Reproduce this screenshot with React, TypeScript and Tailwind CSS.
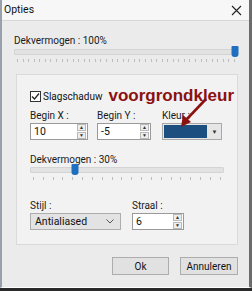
import type { ReactNode } from "react";

const font = { fontFamily: 'Roboto, "Noto Sans", sans-serif' };

function Ticks({ count }: { count: number }) {
  return (
    <div className="mt-[4px] flex h-[3px] justify-between px-[3px]">
      {Array.from({ length: count }).map((_, i) => (
        <span key={i} className="h-[3px] w-px bg-[#bdbdbd]" />
      ))}
    </div>
  );
}

function Slider({ pct, ticks }: { pct: number; ticks: number }) {
  return (
    <div>
      <div className="relative h-[6px] rounded-[1px] border border-[#d4d4d4] bg-[#e2e2e2]">
        <div
          className="absolute top-[-4px] h-[11px] w-[7px] -translate-x-1/2 rounded-b-[3px] rounded-t-[1px] bg-[#1f6fc0]"
          style={{ left: `${pct}%` }}
        />
      </div>
      <Ticks count={ticks} />
    </div>
  );
}

function Spin() {
  return (
    <div className="flex h-full w-[9px] flex-col justify-center gap-px py-[2px]">
      <div className="flex flex-1 items-center justify-center border border-[#b9b9b9] bg-[#eeeeee] text-[5px] leading-none text-[#333]">▲</div>
      <div className="flex flex-1 items-center justify-center border border-[#b9b9b9] bg-[#eeeeee] text-[5px] leading-none text-[#333]">▼</div>
    </div>
  );
}

function NumField({ value, className }: { value: string; className: string }) {
  return (
    <div className={`flex h-[17px] items-center justify-between border border-[#9a9a9a] bg-white pl-[3px] pr-[1px] text-[10.5px] text-[#111] ${className}`}>
      <span>{value}</span>
      <Spin />
    </div>
  );
}

function Label({ children }: { children: ReactNode }) {
  return <div className="text-[10px] leading-[13px] text-[#1a1a1a]">{children}</div>;
}

function Button({ children, className }: { children: ReactNode; className: string }) {
  return (
    <div className={`flex h-[18px] items-center justify-center border border-[#adadad] bg-[#e1e1e1] text-[10px] text-[#111] ${className}`}>
      {children}
    </div>
  );
}

export default function App() {
  return (
    <div className="flex h-[291px] w-[252px] flex-col bg-[#2a2a2a]" style={font}>
      <div className="flex h-[288px] flex-col border-b border-l-[2px] border-r-[3px] border-b-white border-l-[#97a1ab] border-r-[#6c6c6c]">
        <div className="flex h-[21px] items-center justify-between border-b border-[#d6d6d6] bg-[#f7f7f7] pl-[2px] pr-[7px]">
          <span className="text-[10.5px] text-[#111]">Opties</span>
          <svg width="11" height="11" viewBox="0 0 11 11">
            <path d="M1 1 L10 10 M10 1 L1 10" stroke="#222" strokeWidth="1.1" />
          </svg>
        </div>
        <div className="flex flex-1 flex-col bg-[#ebebeb] pl-[12px] pr-[11px]">
          <div className="mt-[13px] text-[10px] leading-[13px] text-[#1a1a1a]">Dekvermogen : 100%</div>
          <div className="mt-[2px]">
            <Slider pct={99} ticks={40} />
          </div>
          <div className="ml-[2px] mt-[12px] flex h-[171px] flex-col border border-[#dadada] bg-[#f2f2f2] pl-[13px] pr-[13px]">
            <div className="mt-[12px] flex h-[18px] items-center">
              <div className="flex h-[11px] w-[11px] items-center justify-center border border-[#333] bg-white">
                <svg width="9" height="9" viewBox="0 0 9 9">
                  <path d="M1 4.5 L3.5 7 L8 1.5" stroke="#222" strokeWidth="1.2" fill="none" />
                </svg>
              </div>
              <span className="ml-[2px] text-[10px] text-[#111]">Slagschaduw</span>
              <span
                className="ml-[6px] text-[17px] font-bold leading-[18px] text-[#8b1111]"
                style={{ fontFamily: '"Liberation Sans", Arial, sans-serif' }}
              >
                voorgrondkleur
              </span>
            </div>
            <div className="relative mt-[4px] flex">
              <div>
                <Label>Begin X :</Label>
                <NumField value="10" className="mt-px w-[58px]" />
              </div>
              <div className="ml-[9px]">
                <Label>Begin Y :</Label>
                <NumField value="-5" className="mt-px w-[54px]" />
              </div>
              <div className="ml-[11px]">
                <Label>Kleur :</Label>
                <div className="mt-px flex h-[17px] w-[60px] border border-[#a8a8a8] bg-[#e6e6e6]">
                  <div className="m-[1px] flex-1 bg-[#1c4f7f]" />
                  <div className="flex w-[13px] items-center justify-center text-[6px] text-[#333]">▼</div>
                </div>
              </div>
              <svg className="absolute left-[150px] top-[-11px]" width="28" height="30" viewBox="0 0 28 30">
                <path d="M26 1 L6 22" stroke="#8b1111" strokeWidth="2.6" fill="none" />
                <path d="M1 29 L3 17 L11 24 Z" fill="#8b1111" />
              </svg>
            </div>
            <div className="mt-[13px]">
              <Label>Dekvermogen : 30%</Label>
            </div>
            <div className="mt-[1px]">
              <Slider pct={23} ticks={20} />
            </div>
            <div className="mt-[19px] flex">
              <div>
                <Label>Stijl :</Label>
                <div className="mt-px flex h-[17px] w-[91px] items-center justify-between border border-[#adadad] bg-[#e3e3e3] pl-[4px] pr-[6px] text-[10.5px] text-[#111]">
                  <span>Antialiased</span>
                  <svg width="8" height="5" viewBox="0 0 8 5">
                    <path d="M0.5 0.5 L4 4 L7.5 0.5" stroke="#555" fill="none" />
                  </svg>
                </div>
              </div>
              <div className="ml-[11px]">
                <Label>Straal :</Label>
                <NumField value="6" className="mt-px w-[52px]" />
              </div>
            </div>
          </div>
          <div className="mt-[12px] flex justify-end gap-[11px]">
            <Button className="w-[57px]">Ok</Button>
            <Button className="w-[58px]">Annuleren</Button>
          </div>
        </div>
      </div>
    </div>
  );
}
